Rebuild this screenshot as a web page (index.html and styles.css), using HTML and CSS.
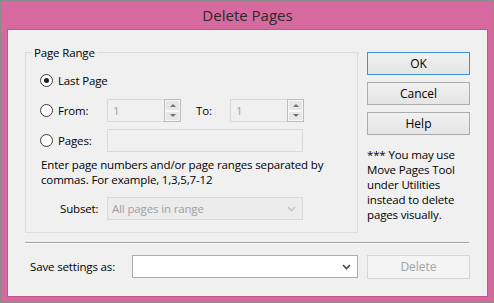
FILE: index.html
```html
<!DOCTYPE html>
<html lang="en">
<head>
    <meta charset="UTF-8">
    <meta name="viewport" content="width=device-width, initial-scale=1.0">
    <title>Delete Pages</title>
    <link rel="stylesheet" href="styles.css">
</head>
<body>
    <div class="window">
        <div class="title-bar">Delete Pages</div>
        <div class="client">
            <div class="top-row">
                <fieldset class="group">
                    <legend>Page Range</legend>
                    <div class="group-body">
                        <div class="option-row">
                            <label class="radio-label"><span class="radio checked"></span>Last Page</label>
                        </div>
                        <div class="option-row">
                            <label class="radio-label"><span class="radio"></span>From:</label>
                            <div class="spin-box">
                                <input type="text" value="1" disabled>
                                <span class="spin-buttons">
                                    <span class="spin-btn up"></span>
                                    <span class="spin-btn down"></span>
                                </span>
                            </div>
                            <span class="to-label">To:</span>
                            <div class="spin-box">
                                <input type="text" value="1" disabled>
                                <span class="spin-buttons">
                                    <span class="spin-btn up"></span>
                                    <span class="spin-btn down"></span>
                                </span>
                            </div>
                        </div>
                        <div class="option-row">
                            <label class="radio-label"><span class="radio"></span>Pages:</label>
                            <input class="pages-input" type="text" disabled>
                        </div>
                        <p class="hint">Enter page numbers and/or page ranges separated by commas. For example, 1,3,5,7-12</p>
                        <div class="option-row">
                            <span class="subset-label">Subset:</span>
                            <div class="combo disabled">
                                <span>All pages in range</span>
                                <svg width="9" height="6" viewBox="0 0 9 6"><path d="M1 1 L4.5 4.5 L8 1" fill="none" stroke="#c4c4c4" stroke-width="1.6"/></svg>
                            </div>
                        </div>
                    </div>
                </fieldset>
                <div class="button-column">
                    <button class="btn default">OK</button>
                    <button class="btn">Cancel</button>
                    <button class="btn">Help</button>
                    <p class="note">*** You may use<br>Move Pages Tool<br>under Utilities<br>instead to delete<br>pages visually.</p>
                </div>
            </div>
            <div class="separator"></div>
            <div class="bottom-row">
                <span class="save-label">Save settings as:</span>
                <div class="combo editable">
                    <span></span>
                    <svg width="9" height="6" viewBox="0 0 9 6"><path d="M1 1 L4.5 4.5 L8 1" fill="none" stroke="#4a4a4a" stroke-width="1.6"/></svg>
                </div>
                <button class="btn" disabled>Delete</button>
            </div>
        </div>
    </div>
</body>
</html>
```

FILE: styles.css
```css
body {
    margin: 0;
    font-family: "Open Sans", Arial, sans-serif;
    font-size: 11.5px;
    letter-spacing: -0.15px;
    color: #000;
}
.window {
    width: 494px;
    height: 303px;
    box-sizing: border-box;
    border: 1px solid #8c8c8c;
    background-color: #d6699e;
    padding: 0 5px 5px 6px;
    display: flex;
    flex-direction: column;
}
.title-bar {
    height: 28px;
    flex-shrink: 0;
    display: flex;
    align-items: center;
    justify-content: center;
    font-size: 15px;
    letter-spacing: 0;
    color: #2a2a2a;
}
.client {
    flex: 1;
    background-color: #f0f0f0;
    border: 1px solid #c0568a;
    padding: 15px 17px 0;
}
.top-row {
    display: flex;
    gap: 9px;
}

/* group box */
.group {
    margin: 0;
    padding: 0;
    width: 333px;
    height: 188px;
    box-sizing: border-box;
    border: 1px solid #dcdcdc;
    flex-shrink: 0;
}
.group legend {
    margin-left: 6px;
    padding: 0 2px;
    line-height: 15px;
}
.group-body {
    padding: 9px 0 0 14px;
    display: flex;
    flex-direction: column;
    gap: 7px;
}
.option-row {
    display: flex;
    align-items: center;
    height: 23px;
}
.radio-label {
    width: 67px;
    display: flex;
    align-items: center;
    flex-shrink: 0;
    white-space: nowrap;
}
.radio {
    width: 13px;
    height: 13px;
    box-sizing: border-box;
    border: 1px solid #3c3c3c;
    border-radius: 50%;
    background-color: #fff;
    margin-right: 5px;
    display: flex;
    align-items: center;
    justify-content: center;
    flex-shrink: 0;
}
.radio.checked::after {
    content: "";
    width: 5px;
    height: 5px;
    border-radius: 50%;
    background-color: #1e1e1e;
}
input[type="text"] {
    font-family: inherit;
    font-size: 11.5px;
    height: 23px;
    box-sizing: border-box;
    border: 1px solid #d9d9d9;
    background-color: #f0f0f0;
    color: #a0a0a0;
    padding: 0 5px;
    margin: 0;
}
.spin-box {
    width: 74px;
    height: 23px;
    display: flex;
    flex-shrink: 0;
}
.spin-box input {
    width: 57px;
    border-right: none;
}
.spin-buttons {
    width: 17px;
    box-sizing: border-box;
    border: 1px solid #bcbcbc;
    display: flex;
    flex-direction: column;
}
.spin-btn {
    flex: 1;
    border: 1px solid #f7f7f7;
    background-color: #e6e6e6;
    display: flex;
    align-items: center;
    justify-content: center;
}
.spin-btn::after {
    content: "";
    border-left: 3px solid transparent;
    border-right: 3px solid transparent;
}
.spin-btn.up::after {
    border-bottom: 3px solid #707070;
}
.spin-btn.down::after {
    border-top: 3px solid #707070;
}
.to-label {
    width: 49px;
    padding-left: 15px;
    box-sizing: border-box;
    flex-shrink: 0;
}
.pages-input {
    width: 196px;
}
.hint {
    margin: -2px 0 3px 1px;
    line-height: 15px;
    width: 314px;
}
.subset-label {
    width: 67px;
    padding-left: 20px;
    box-sizing: border-box;
    flex-shrink: 0;
}

/* combo boxes */
.combo {
    height: 23px;
    box-sizing: border-box;
    display: flex;
    align-items: center;
    justify-content: space-between;
    padding: 0 6px 0 4px;
}
.combo.disabled {
    width: 196px;
    border: 1px solid #d9d9d9;
    background-color: #ececec;
    color: #a0a0a0;
}
.combo.editable {
    width: 226px;
    border: 1px solid #acacac;
    background-color: #fff;
}

/* buttons */
.button-column {
    width: 103px;
    margin-top: 7px;
    display: flex;
    flex-direction: column;
    gap: 7px;
}
.btn {
    height: 23px;
    width: 103px;
    font-family: inherit;
    font-size: 12px;
    color: #000;
    border: 1px solid #acacac;
    background: linear-gradient(#f0f0f0, #e5e5e5);
    padding: 0;
}
.btn.default {
    border-color: #3c8fd8;
}
.btn:disabled {
    background: #f4f4f4;
    border-color: #d5d5d5;
    color: #a3a3a3;
}
.note {
    margin: 5px 0 0;
    line-height: 15px;
}

.separator {
    width: 444px;
    height: 1px;
    background-color: #a0a0a0;
    border-bottom: 1px solid #fff;
    margin-top: 9px;
}
.bottom-row {
    display: flex;
    align-items: center;
    height: 25px;
    margin-top: 10px;
}
.save-label {
    width: 107px;
    padding-left: 5px;
    box-sizing: border-box;
}
.bottom-row .btn {
    margin-left: 9px;
    height: 24px;
}
```
